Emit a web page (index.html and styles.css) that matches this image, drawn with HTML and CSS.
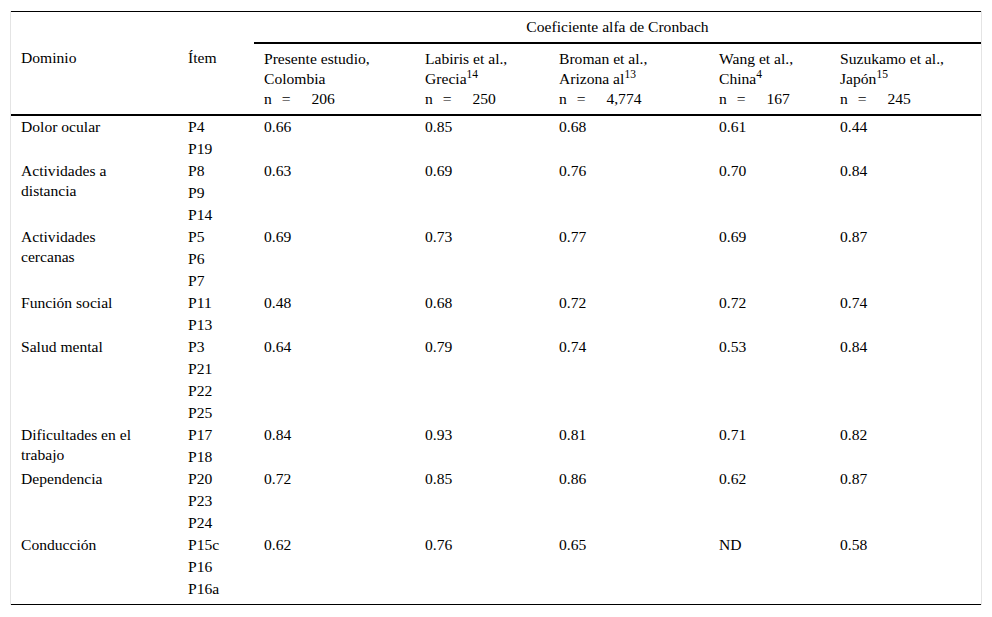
FILE: index.html
```html
<!DOCTYPE html>
<html lang="es">
<head>
<meta charset="utf-8">
<title>Coeficiente alfa de Cronbach</title>
<link rel="stylesheet" href="styles.css">
</head>
<body>
<div class="wrap">
<table class="tbl">
  <colgroup>
    <col class="c-dom"><col class="c-item"><col class="c-pres"><col class="c-lab"><col class="c-bro"><col class="c-wang"><col class="c-suz">
  </colgroup>
  <thead>
    <tr class="h1">
      <th colspan="2"></th>
      <th colspan="5" class="span">Coeficiente alfa de Cronbach</th>
    </tr>
    <tr class="h2">
      <th>Dominio</th>
      <th>Ítem</th>
      <th>Presente estudio,<br>Colombia<br>n <span class="eq">=</span> 206</th>
      <th>Labiris et al.,<br>Grecia<sup>14</sup><br>n <span class="eq">=</span> 250</th>
      <th>Broman et al.,<br>Arizona al<sup>13</sup><br>n <span class="eq">=</span> 4,774</th>
      <th>Wang et al.,<br>China<sup>4</sup><br>n <span class="eq">=</span> 167</th>
      <th>Suzukamo et al.,<br>Japón<sup>15</sup><br>n <span class="eq">=</span> 245</th>
    </tr>
  </thead>
  <tbody>
    <tr><td class="dom" rowspan="2">Dolor ocular</td><td>P4</td><td>0.66</td><td>0.85</td><td>0.68</td><td>0.61</td><td>0.44</td></tr>
    <tr><td>P19</td><td></td><td></td><td></td><td></td><td></td></tr>

    <tr><td class="dom" rowspan="3">Actividades a distancia</td><td>P8</td><td>0.63</td><td>0.69</td><td>0.76</td><td>0.70</td><td>0.84</td></tr>
    <tr><td>P9</td><td></td><td></td><td></td><td></td><td></td></tr>
    <tr><td>P14</td><td></td><td></td><td></td><td></td><td></td></tr>

    <tr><td class="dom" rowspan="3">Actividades cercanas</td><td>P5</td><td>0.69</td><td>0.73</td><td>0.77</td><td>0.69</td><td>0.87</td></tr>
    <tr><td>P6</td><td></td><td></td><td></td><td></td><td></td></tr>
    <tr><td>P7</td><td></td><td></td><td></td><td></td><td></td></tr>

    <tr><td class="dom" rowspan="2">Función social</td><td>P11</td><td>0.48</td><td>0.68</td><td>0.72</td><td>0.72</td><td>0.74</td></tr>
    <tr><td>P13</td><td></td><td></td><td></td><td></td><td></td></tr>

    <tr><td class="dom" rowspan="4">Salud mental</td><td>P3</td><td>0.64</td><td>0.79</td><td>0.74</td><td>0.53</td><td>0.84</td></tr>
    <tr><td>P21</td><td></td><td></td><td></td><td></td><td></td></tr>
    <tr><td>P22</td><td></td><td></td><td></td><td></td><td></td></tr>
    <tr><td>P25</td><td></td><td></td><td></td><td></td><td></td></tr>

    <tr><td class="dom" rowspan="2">Dificultades en el trabajo</td><td>P17</td><td>0.84</td><td>0.93</td><td>0.81</td><td>0.71</td><td>0.82</td></tr>
    <tr><td>P18</td><td></td><td></td><td></td><td></td><td></td></tr>

    <tr><td class="dom" rowspan="3">Dependencia</td><td>P20</td><td>0.72</td><td>0.85</td><td>0.86</td><td>0.62</td><td>0.87</td></tr>
    <tr><td>P23</td><td></td><td></td><td></td><td></td><td></td></tr>
    <tr><td>P24</td><td></td><td></td><td></td><td></td><td></td></tr>

    <tr><td class="dom" rowspan="3">Conducción</td><td>P15c</td><td>0.62</td><td>0.76</td><td>0.65</td><td>ND</td><td>0.58</td></tr>
    <tr><td>P16</td><td></td><td></td><td></td><td></td><td></td></tr>
    <tr class="last"><td>P16a</td><td></td><td></td><td></td><td></td><td></td></tr>
  </tbody>
</table>
</div>
</body>
</html>
```

FILE: styles.css
```css
html, body {
  margin: 0;
  padding: 0;
  background: #ffffff;
}

body {
  font-family: "Liberation Serif", "Times New Roman", serif;
  font-size: 15.6px;
  color: #000000;
}

.wrap {
  margin: 11px 0 0 10px;
  width: 970px;
  border-left: 1px solid #e4e4e4;
  border-right: 1px solid #e4e4e4;
}

.tbl {
  width: 970px;
  table-layout: fixed;
  border-collapse: collapse;
  border-top: 1px solid #000;
  border-bottom: 1px solid #000;
}

.c-dom { width: 167px; }
.c-item { width: 76px; }
.c-pres { width: 161px; }
.c-lab { width: 134px; }
.c-bro { width: 160px; }
.c-wang { width: 121px; }
.c-suz { width: 151px; }

.tbl th,
.tbl td {
  text-align: left;
  vertical-align: top;
  font-weight: normal;
  line-height: 20px;
  padding: 1px 10px;
}

.tbl .h1 th {
  padding: 5px 10px;
}

.tbl .h1 .span {
  text-align: center;
  border-bottom: 2px solid #000;
}

.tbl .h2 th {
  padding: 5px 10px;
  border-bottom: 2px solid #000;
}

.tbl td.dom {
  padding-right: 32px;
}

.tbl .last td {
  padding-bottom: 5px;
}

sup {
  font-size: 11.5px;
  line-height: 0;
  vertical-align: 6px;
}

.eq {
  margin: 0 17px 0 6px;
}
```
